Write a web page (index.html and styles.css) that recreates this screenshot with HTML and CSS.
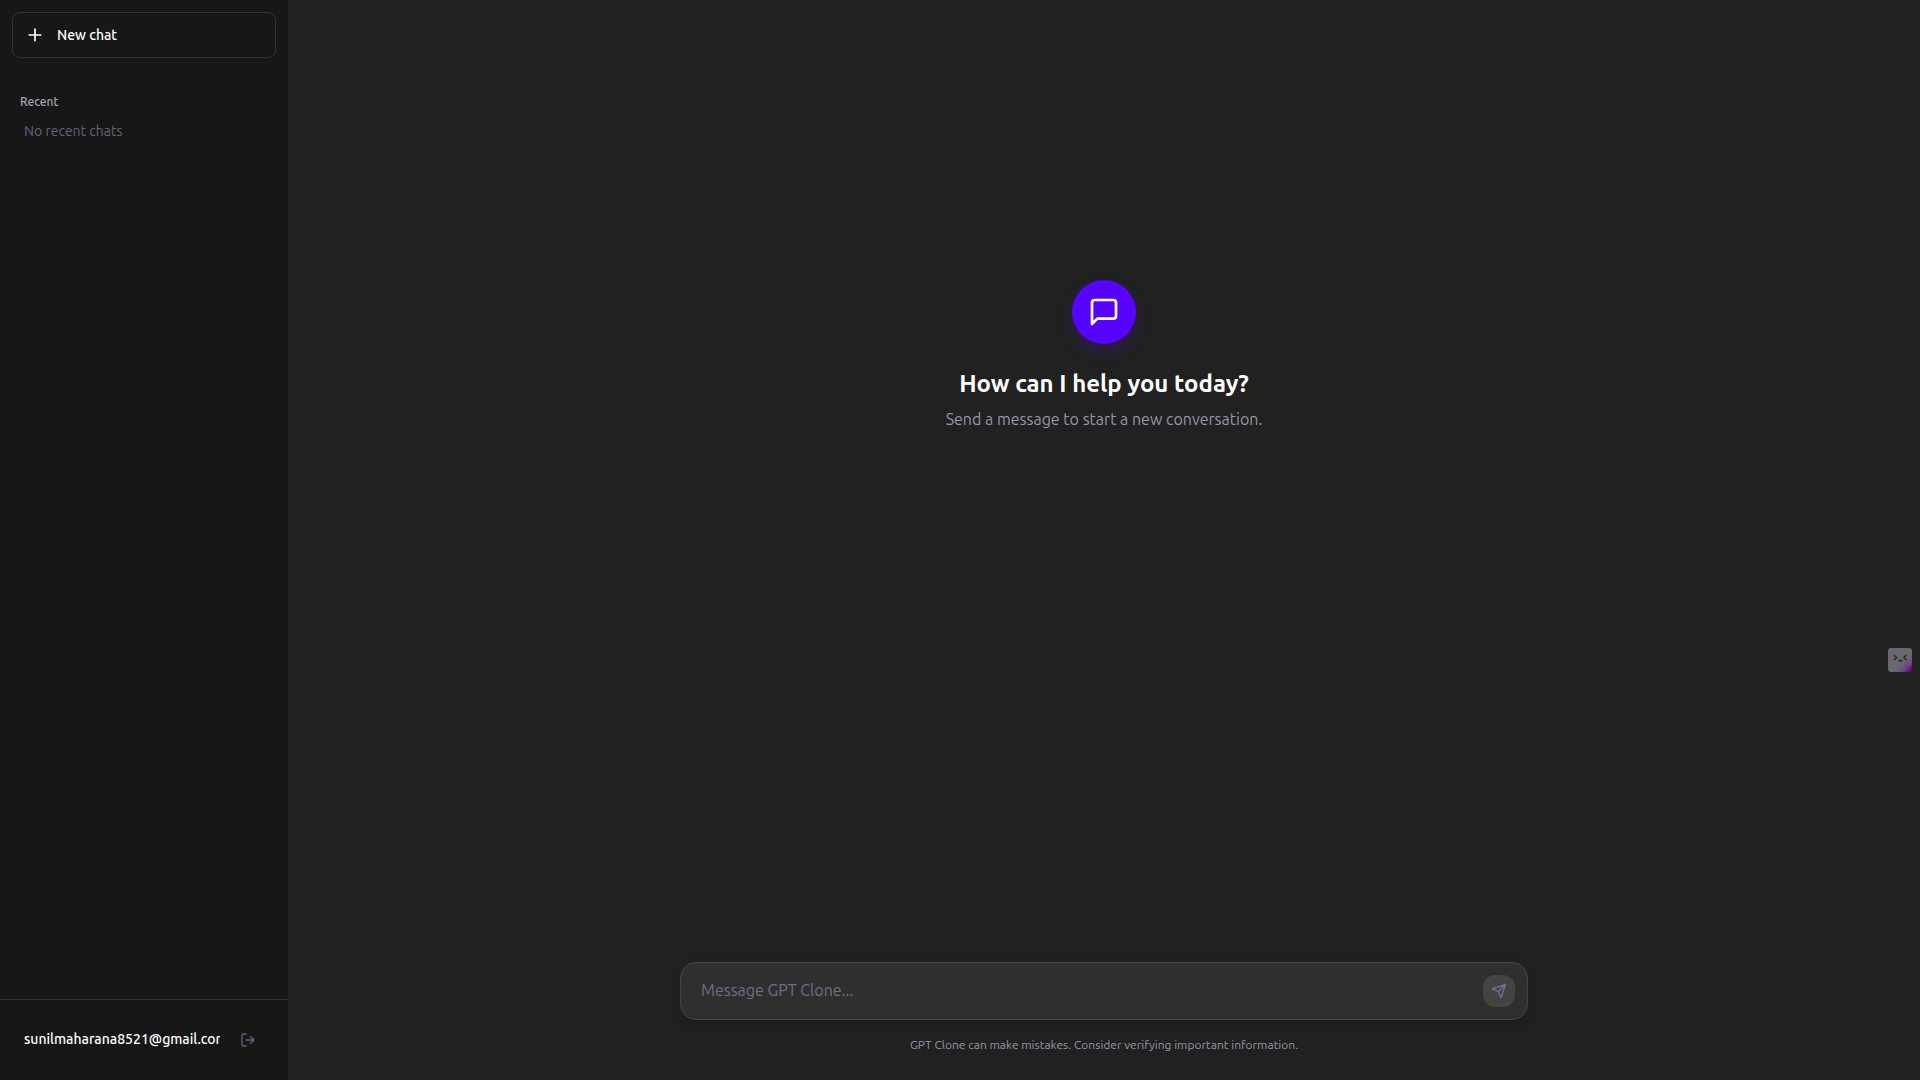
FILE: index.html
```html
<!DOCTYPE html>
<html lang="en">
<head>
    <meta charset="UTF-8">
    <meta name="viewport" content="width=device-width, initial-scale=1.0">
    <title>GPT Clone</title>
    <link rel="stylesheet" href="styles.css">
</head>
<body>
    <div class="app">
        <aside class="sidebar">
            <button type="button" class="new-chat">
                <svg class="icon" width="20" height="20" viewBox="0 0 24 24"><path d="M12 5v14M5 12h14"/></svg>
                New chat
            </button>

            <nav class="history">
                <h2>Recent</h2>
                <p>No recent chats</p>
            </nav>

            <div class="account">
                <span class="email">sunilmaharana8521@gmail.com</span>
                <button type="button" class="logout" aria-label="Log out">
                    <svg class="icon" width="16" height="16" viewBox="0 0 24 24"><path d="M9 21H5a2 2 0 0 1-2-2V5a2 2 0 0 1 2-2h4M16 17l5-5-5-5M21 12H9"/></svg>
                </button>
            </div>
        </aside>

        <main class="chat">
            <section class="welcome">
                <div class="welcome-icon">
                    <svg class="icon" width="32" height="32" viewBox="0 0 24 24"><path d="M21 15a2 2 0 0 1-2 2H7l-4 4V5a2 2 0 0 1 2-2h14a2 2 0 0 1 2 2z"/></svg>
                </div>
                <h1>How can I help you today?</h1>
                <p>Send a message to start a new conversation.</p>
            </section>

            <footer class="composer">
                <form class="message-box">
                    <input type="text" id="message" aria-label="Message" placeholder="Message GPT Clone...">
                    <button type="submit" class="send" aria-label="Send message" disabled>
                        <svg class="icon" width="16" height="16" viewBox="0 0 24 24"><path d="m22 2-7 20-4-9-9-4ZM22 2 11 13"/></svg>
                    </button>
                </form>
                <p class="disclaimer">GPT Clone can make mistakes. Consider verifying important information.</p>
            </footer>
        </main>
    </div>

    <button type="button" class="helper" aria-label="Assistant">
        <svg width="24" height="24" viewBox="0 0 24 24"><path d="M6 7l2.500 2.500L6 12M18.500 7L16 9.500l2.500 2.500M11 12l.5.7h2l.5-.7"/></svg>
    </button>
</body>
</html>
```
FILE: styles.css
```css
* {
    box-sizing: border-box;
    margin: 0;
    padding: 0;
}
body {
    font-family: Ubuntu, "Noto Sans", sans-serif;
    background: #212121;
    color: #ffffff;
}
button, input {
    font: inherit;
    color: inherit;
    border: none;
    background: none;
}
button {
    cursor: pointer;
}
.icon {
    display: block;
    flex-shrink: 0;
    fill: none;
    stroke: currentColor;
    stroke-width: 2;
    stroke-linecap: round;
    stroke-linejoin: round;
}
.app {
    display: flex;
    height: 100vh;
}

/* Sidebar */
.sidebar {
    display: flex;
    flex-direction: column;
    width: 288px;
    background: #171717;
}
.new-chat {
    display: flex;
    align-items: center;
    gap: 12px;
    margin: 12px;
    padding: 12px;
    border: 1px solid #333333;
    border-radius: 8px;
    font-size: 14px;
    font-weight: 500;
    line-height: 20px;
}
.history {
    flex: 1;
    padding: 20px;
}
.history h2 {
    padding: 4px 0;
    font-size: 12px;
    font-weight: 500;
    line-height: 16px;
    color: #a3a6b6;
}
.history p {
    padding: 8px 4px;
    font-size: 14px;
    line-height: 18px;
    color: #636679;
}
.account {
    display: flex;
    align-items: center;
    gap: 20px;
    height: 81px;
    padding: 0 32px 0 24px;
    border-top: 1px solid #333333;
}
.email {
    flex: 1;
    overflow: hidden;
    padding-bottom: 2px;
    white-space: nowrap;
    font-size: 14px;
    font-weight: 500;
    line-height: 20px;
}
.logout {
    color: #636679;
}

/* Chat */
.chat {
    display: flex;
    flex: 1;
    flex-direction: column;
}
.welcome {
    display: flex;
    flex: 1;
    flex-direction: column;
    align-items: center;
    padding-top: 280px;
}
.welcome-icon {
    display: grid;
    place-items: center;
    width: 64px;
    height: 64px;
    margin-bottom: 24px;
    border-radius: 50%;
    background: #5604ff;
    box-shadow: 0 8px 16px rgba(86, 4, 255, 0.2);
}
.welcome h1 {
    margin-bottom: 8px;
    font-size: 24px;
    font-weight: 600;
    line-height: 32px;
}
.welcome p {
    font-size: 16px;
    line-height: 22px;
    color: #9497a8;
}
.composer {
    width: 100%;
    max-width: 880px;
    margin: 0 auto;
    padding: 0 16px 26px;
}
.message-box {
    display: flex;
    align-items: center;
    padding: 12px 12px 12px 20px;
    border: 1px solid #444444;
    border-radius: 16px;
    background: #2f2f2f;
    box-shadow: 0 4px 12px rgba(0, 0, 0, 0.1);
}
.message-box input {
    flex: 1;
    min-width: 0;
    height: 32px;
    padding-bottom: 2px;
    font-size: 16px;
    outline: none;
}
.message-box input::placeholder {
    color: #6c6f85;
}
.send {
    display: grid;
    place-items: center;
    width: 32px;
    height: 32px;
    border-radius: 12px;
    background: #444444;
    color: #6f7090;
}
.disclaimer {
    margin-top: 16px;
    text-align: center;
    font-size: 12px;
    line-height: 18px;
    color: #9497a8;
}

/* Floating assistant button */
.helper {
    position: fixed;
    right: 8px;
    top: 60vh;
    width: 24px;
    height: 24px;
    border-radius: 3px;
    background: linear-gradient(135deg, #67696e 0%, #67696e 60%, #6b4580 80%, #76008c 92%);
}
.helper svg {
    display: block;
    fill: none;
    stroke: #22252c;
    stroke-width: 1.5;
}
```
